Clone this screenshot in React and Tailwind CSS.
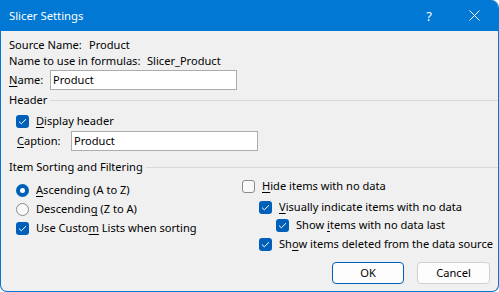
import React from 'react';

const font = { fontFamily: '"Segoe UI", "Noto Sans", sans-serif' };

const U = ({ children }) => <span className="underline underline-offset-2">{children}</span>;

const Check = ({ checked }) =>
  checked ? (
    <span className="flex h-[13px] w-[13px] shrink-0 items-center justify-center rounded-[3px] bg-[#005fb8]">
      <svg width="9" height="7" viewBox="0 0 9 7">
        <path d="M1 3.6 L3.3 5.8 L8 1.2" fill="none" stroke="#ffffff" strokeWidth="1" />
      </svg>
    </span>
  ) : (
    <span className="h-[13px] w-[13px] shrink-0 rounded-[3px] border border-[#8b8b8b] bg-[#f9f9f9]" />
  );

const Radio = ({ checked }) =>
  checked ? (
    <span className="flex h-[13px] w-[13px] shrink-0 items-center justify-center rounded-full bg-[#005fb8]">
      <span className="h-[5px] w-[5px] rounded-full bg-white" />
    </span>
  ) : (
    <span className="h-[13px] w-[13px] shrink-0 rounded-full border border-[#8b8b8b] bg-[#f9f9f9]" />
  );

const Option = ({ control, children, className = '' }) => (
  <div className={`flex h-[16px] items-center gap-[7px] whitespace-nowrap ${className}`}>
    {control}
    <span>{children}</span>
  </div>
);

const Group = ({ title, lineStart }) => (
  <div className="flex h-[16px] items-center whitespace-nowrap">
    <span className={`shrink-0 ${lineStart}`}>{title}</span>
    <div className="h-px flex-1 bg-[#d9d9d9]" />
  </div>
);

export default function App() {
  return (
    <div className="h-[292px] w-[499px] bg-white">
      <div
        className="flex h-[292px] w-[499px] flex-col overflow-hidden rounded-tr-[8px] rounded-b-[7px] border-x border-b border-[#0078d4] bg-[#f0f0f0] text-[11.1px] leading-[16px] text-black"
        style={font}
      >
        <div className="flex h-[31px] shrink-0 items-center bg-[#0078d4] pl-[8px] text-[11.3px] text-white">
          <span className="flex-1">Slicer Settings</span>
          <span className="mr-[37px] text-[13px]">?</span>
          <svg width="11" height="11" viewBox="0 0 11 11" className="mr-[18px]">
            <path d="M0.5 0.5 L10.5 10.5 M10.5 0.5 L0.5 10.5" stroke="#ffffff" strokeWidth="1" />
          </svg>
        </div>

        <div className="flex flex-1 flex-col whitespace-nowrap pl-[8px]">
          <div className="mt-[6px] flex h-[16px] items-center">
            <span className="w-[80px] shrink-0">Source Name:</span>
            <span>Product</span>
          </div>
          <div className="flex h-[16px] items-center">
            <span className="w-[138px] shrink-0">Name to use in formulas:</span>
            <span>Slicer_Product</span>
          </div>
          <div className="mt-[1px] flex h-[20px] items-center">
            <span className="w-[41px] shrink-0"><U>N</U>ame:</span>
            <div className="flex h-[20px] w-[187px] items-center border border-[#acacac] bg-white pl-[2px]">Product</div>
          </div>

          <div className="mt-[2px]">
            <Group title="Header" lineStart="w-[41px]" />
          </div>
          <Option className="mt-[5px] pl-[7px]" control={<Check checked />}>
            <U>D</U>isplay header
          </Option>
          <div className="mt-[2px] flex h-[20px] items-center pl-[8px]">
            <span className="w-[54px] shrink-0"><U>C</U>aption:</span>
            <div className="flex h-[20px] w-[187px] items-center border border-[#acacac] bg-white pl-[2px]">Product</div>
          </div>

          <div className="mt-[8px]">
            <Group title="Item Sorting and Filtering" lineStart="w-[137px]" />
          </div>

          <div className="flex h-[77px] items-start">
            <div className="flex w-[233px] shrink-0 flex-col gap-[3px] pl-[7px] pt-[7px]">
              <Option control={<Radio checked />}>
                <U>A</U>scending (A to Z)
              </Option>
              <Option control={<Radio />}>
                Descendin<U>g</U> (Z to A)
              </Option>
              <Option control={<Check checked />}>
                Use Custo<U>m</U> Lists when sorting
              </Option>
            </div>
            <div className="flex flex-col pt-[3px]">
              <Option control={<Check />}>
                <U>H</U>ide items with no data
              </Option>
              <Option className="mt-[5px] pl-[17px]" control={<Check checked />}>
                <U>V</U>isually indicate items with no data
              </Option>
              <Option className="mt-[2px] pl-[34px]" control={<Check checked />}>
                Show <U>i</U>tems with no data last
              </Option>
              <Option className="mt-[3px] pl-[17px]" control={<Check checked />}>
                Sh<U>o</U>w items deleted from the data source
              </Option>
            </div>
          </div>

          <div className="mt-[10px] flex justify-end gap-[13px] pr-[8px]">
            <button className="h-[22px] w-[72px] rounded-[4px] border border-[#005fb8] bg-[#fdfdfd]">OK</button>
            <button className="h-[22px] w-[73px] rounded-[4px] border border-[#d0d0d0] bg-[#fdfdfd]">Cancel</button>
          </div>
        </div>
      </div>
    </div>
  );
}
